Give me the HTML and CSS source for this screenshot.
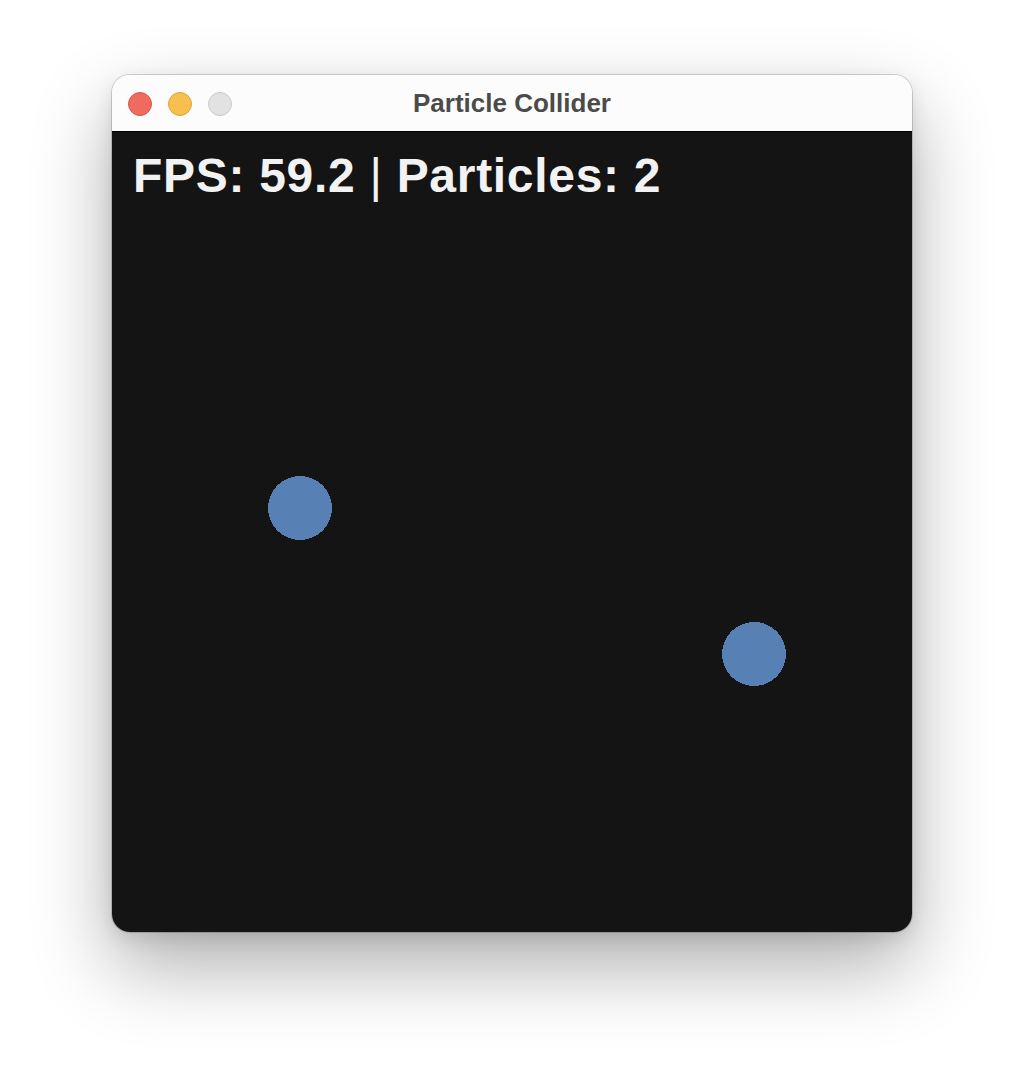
FILE: index.html
```html
<!DOCTYPE html>
<html>
<head>
<meta charset="utf-8">
<link rel="stylesheet" href="styles.css">
<title>Particle Collider</title>
</head>
<body>
<div class="window">
  <div class="titlebar">
    <div class="lights">
      <span class="light red"></span>
      <span class="light yellow"></span>
      <span class="light gray"></span>
    </div>
    <div class="title">Particle Collider</div>
  </div>
  <div class="canvas">
    <div class="hud">FPS: 59.2 <span class="sep">|</span> Particles: 2</div>
    <svg class="particle p1" width="64" height="64" viewBox="0 0 64 64" shape-rendering="crispEdges"><circle cx="32" cy="32" r="32" fill="#5780b4"/></svg>
    <svg class="particle p2" width="64" height="64" viewBox="0 0 64 64" shape-rendering="crispEdges"><circle cx="32" cy="32" r="32" fill="#5780b4"/></svg>
  </div>
</div>
</body>
</html>
```

FILE: styles.css
```css
html, body {
  margin: 0;
  padding: 0;
  background: #ffffff;
}
body {
  width: 1024px;
  height: 1080px;
  overflow: hidden;
}
.window {
  margin: 75px 0 0 112px;
  width: 800px;
  border-radius: 18px;
  overflow: hidden;
  box-shadow: 0 0 0 1px rgba(0,0,0,0.16), 0 34px 80px rgba(0,0,0,0.32), 0 6px 18px rgba(0,0,0,0.1);
  display: flex;
  flex-direction: column;
}
.titlebar {
  height: 56px;
  background: #fcfcfc;
  border-bottom: 1px solid #000;
  display: flex;
  align-items: center;
  position: relative;
}
.lights {
  display: flex;
  gap: 16px;
  padding-left: 16px;
  padding-top: 1px;
}
.light {
  width: 24px;
  height: 24px;
  border-radius: 50%;
  box-sizing: border-box;
  border: 1px solid;
  display: block;
}
.red { background: #ef6b5f; border-color: #d4574c; }
.yellow { background: #f6bf4f; border-color: #d9a441; }
.gray { background: #e2e2e2; border-color: #c9c9c9; }
.title {
  position: absolute;
  left: 0;
  right: 0;
  top: 0;
  bottom: 0;
  display: flex;
  align-items: center;
  justify-content: center;
  font-family: "Liberation Sans", Arial, sans-serif;
  font-weight: bold;
  font-size: 26px;
  color: #4b4b4b;
  pointer-events: none;
}
.canvas {
  height: 800px;
  background: #141414;
  position: relative;
}
.hud {
  padding: 16px 0 0 21px;
  font-family: "Liberation Sans", Arial, sans-serif;
  font-weight: bold;
  font-size: 48px;
  letter-spacing: 0.7px;
  color: #f2f2f2;
  line-height: 56px;
}
.sep {
  font-weight: normal;
}
.particle {
  position: absolute;
  display: block;
}
.p1 { left: 156px; top: 344px; }
.p2 { left: 610px; top: 490px; }
```
